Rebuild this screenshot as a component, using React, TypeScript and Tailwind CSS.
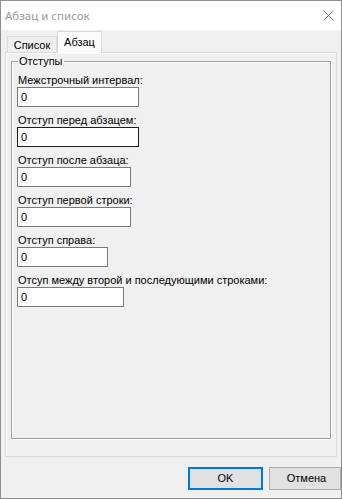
import React from "react";

interface Field {
    label: string;
    width: string;
    focused?: boolean;
}

const fields: Field[] = [
    { label: "Межстрочный интервал:", width: "w-[122px]" },
    { label: "Отступ перед абзацем:", width: "w-[122px]", focused: true },
    { label: "Отступ после абзаца:", width: "w-[114px]" },
    { label: "Отступ первой строки:", width: "w-[114px]" },
    { label: "Отступ справа:", width: "w-[91px]" },
    { label: "Отсуп между второй и последующими строками:", width: "w-[107px]" },
];

export default function App() {
    return (
        <div className="w-[342px] h-[499px] border border-[#8f8f8f] bg-[#f0f0f0] flex flex-col overflow-hidden font-['Liberation_Sans',Arial,sans-serif] text-[11px] text-black">
            {/* title bar */}
            <div className="h-[29px] shrink-0 bg-white flex items-center justify-between pl-[4px] pr-[7px]">
                <span className="font-['Noto_Sans',sans-serif] text-[11.5px] text-[#9a9a9a]">Абзац и список</span>
                <svg width="11" height="11" viewBox="0 0 11 11" className="mt-[-1px]">
                    <path d="M0.5 0.5 L10.5 10.5 M10.5 0.5 L0.5 10.5" stroke="#7a7a7a" strokeWidth="1" fill="none" />
                </svg>
            </div>

            <div className="flex flex-col px-[4px]">
                {/* tabs */}
                <div className="h-[22px] flex items-end pl-[2px]">
                    <div className="h-[16px] w-[50px] border border-b-0 border-[#d9d9d9] bg-[#f0f0f0] flex items-center justify-center pt-[1px] leading-none">
                        Список
                    </div>
                    <div className="relative z-10 h-[22px] -mb-px w-[45px] border border-b-0 border-[#d9d9d9] bg-[#fbfbfb] flex items-start justify-center pt-[3px] leading-[14px]">
                        Абзац
                    </div>
                </div>

                {/* tab page */}
                <div className="h-[405px] border border-[#d9d9d9] shadow-[inset_1px_1px_0_#ffffff] bg-[#f0f0f0] px-[5px] pt-[1px]">
                    <fieldset className="w-[320px] h-[385px] border border-[#a0a0a0] shadow-[inset_1px_1px_0_#ffffff,1px_1px_0_#ffffff] px-[5px] pt-[4px] m-0">
                        <legend className="px-[1px] ml-[1px] leading-[14px]">Отступы</legend>
                        <div className="flex flex-col gap-[5px]">
                            {fields.map((f) => (
                                <div key={f.label} className="flex flex-col">
                                    <div className="h-[14px] leading-[16px] pl-[1px] whitespace-nowrap">{f.label}</div>
                                    <div
                                        className={`mt-px h-[20px] ${f.width} bg-white border ${f.focused ? "border-[#1e1e1e]" : "border-[#7a7a7a]"} flex items-center pl-[3px] leading-none`}
                                    >
                                        0
                                    </div>
                                </div>
                            ))}
                        </div>
                    </fieldset>
                </div>

                {/* buttons */}
                <div className="flex justify-end gap-[6px] pt-[10px] mr-[-4px]">
                    <button className="h-[23px] w-[75px] border-2 border-[#0078d7] bg-[#e1e1e1] flex items-center justify-center leading-none">
                        OK
                    </button>
                    <button className="h-[23px] w-[72px] border border-[#adadad] bg-[#e1e1e1] flex items-center justify-center leading-none pl-[3px]">
                        Отмена
                    </button>
                </div>
            </div>
        </div>
    );
}
